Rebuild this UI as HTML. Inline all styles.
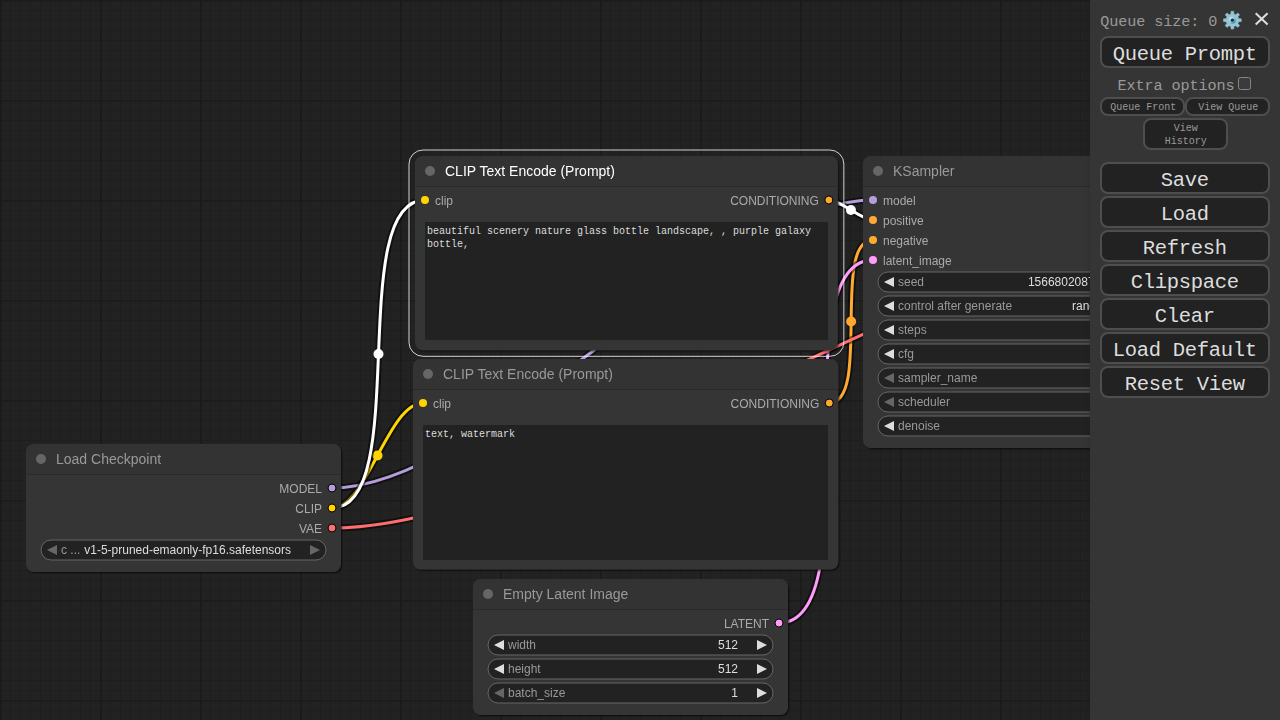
<!DOCTYPE html>
<html><head><meta charset="utf-8"><title>ComfyUI</title>
<style>
html,body{margin:0;padding:0;background:#222;}
body{width:1280px;height:720px;overflow:hidden;position:relative;font-family:"Liberation Sans", sans-serif;}
svg{position:absolute;left:0;top:0;display:block;}
svg text{font-family:"Liberation Sans", sans-serif;opacity:0.999;}
.ta{position:absolute;box-sizing:border-box;background:#222;color:#ddd;padding:3px 2px 2px 2px;font-family:"Liberation Mono", monospace;font-size:10px;line-height:13px;overflow:hidden;white-space:pre-wrap;word-wrap:break-word;}
.menu{position:absolute;left:1090px;top:0;width:170px;height:700px;padding:10px;background:#353535;color:#999;font-family:"Liberation Mono", monospace;font-size:15px;text-align:center;}
.msh{position:absolute;left:1090px;top:0;width:190px;height:720px;background:#353535;box-shadow:3px 3px 8px rgba(0,0,0,0.4);}
.menu .b,.menu .s{box-sizing:border-box;position:absolute;background:#222;border:2px solid #4e4e4e;border-radius:8px;}
.menu .t{position:absolute;white-space:pre;}
.menu .cb{position:absolute;left:148px;top:77px;width:11px;height:11px;border:1px solid #858585;border-radius:2.5px;background:#3b3b3b;}
.menu .gear{position:absolute;left:132px;top:10px;}
.menu .xx{position:absolute;left:165px;top:12px;}
</style></head><body>
<svg id="cv" width="1090" height="720" viewBox="0 0 1090 720">
<defs>
<pattern id="grid" width="100" height="100" patternUnits="userSpaceOnUse">
<rect width="100" height="100" fill="#222222"/>
<path d="M10 2V100M20 2V100M30 2V100M40 2V100M50 2V100M60 2V100M70 2V100M80 2V100M90 2V100" transform="translate(0.5,0)" stroke="#1e1e1e" stroke-width="1" shape-rendering="crispEdges"/>
<path d="M2 10H100M2 20H100M2 30H100M2 40H100M2 50H100M2 60H100M2 70H100M2 80H100M2 90H100" transform="translate(0,0.5)" stroke="#1e1e1e" stroke-width="1" shape-rendering="crispEdges"/>
<rect x="0" y="1" width="100" height="1" fill="#1e1e1e"/>
<rect x="1" y="0" width="1" height="100" fill="#1c1c1c"/>
<rect x="0" y="0" width="100" height="1" fill="#1b1b1b"/>
<rect x="0" y="0" width="1" height="100" fill="#1b1b1b"/>
</pattern>
<filter id="sh" x="-5%" y="-5%" width="112%" height="115%"><feDropShadow dx="1.4" dy="1.4" stdDeviation="0.75" flood-color="#000" flood-opacity="0.5"/></filter>
</defs>
<rect width="1280" height="720" fill="url(#grid)"/>
<g id="links">
<path d="M332 508C366.737 508 388.263 403 423 403" fill="none" stroke="rgba(0,0,0,0.5)" stroke-width="7"/>
<path d="M332 508C366.737 508 388.263 403 423 403" fill="none" stroke="#FFD500" stroke-width="3"/>
<circle cx="377.5" cy="455.5" r="5" fill="#FFD500"/>
<path d="M332 488C485.221 488 719.779 200 873 200" fill="none" stroke="rgba(0,0,0,0.5)" stroke-width="7"/>
<path d="M332 488C485.221 488 719.779 200 873 200" fill="none" stroke="#B39DDB" stroke-width="3"/>
<circle cx="602.5" cy="344" r="5" fill="#B39DDB"/>
<path d="M828.845 200C840.963 200 860.882 220 873 220" fill="none" stroke="rgba(0,0,0,0.5)" stroke-width="7"/>
<path d="M828.845 200C840.963 200 860.882 220 873 220" fill="none" stroke="#FFF" stroke-width="3"/>
<circle cx="850.923" cy="210" r="5" fill="#FFF"/>
<path d="M829.278 403C871.469 403 830.81 240 873 240" fill="none" stroke="rgba(0,0,0,0.5)" stroke-width="7"/>
<path d="M829.278 403C871.469 403 830.81 240 873 240" fill="none" stroke="#FFA931" stroke-width="3"/>
<circle cx="851.139" cy="321.5" r="5" fill="#FFA931"/>
<path d="M779 623C872.743 623 779.257 260 873 260" fill="none" stroke="rgba(0,0,0,0.5)" stroke-width="7"/>
<path d="M779 623C872.743 623 779.257 260 873 260" fill="none" stroke="#FF9CF9" stroke-width="3"/>
<circle cx="826" cy="441.5" r="5" fill="#FF9CF9"/>
<path d="M332 528C566.575 528 984.425 222 1219 222" fill="none" stroke="rgba(0,0,0,0.5)" stroke-width="7"/>
<path d="M332 528C566.575 528 984.425 222 1219 222" fill="none" stroke="#FF6E6E" stroke-width="3"/>
<circle cx="775.5" cy="375" r="5" fill="#FF6E6E"/>
<path d="M332 508C412.434 508 344.566 200 425 200" fill="none" stroke="rgba(0,0,0,0.5)" stroke-width="7"/>
<path d="M332 508C412.434 508 344.566 200 425 200" fill="none" stroke="#FFF" stroke-width="3"/>
<circle cx="378.5" cy="354" r="5" fill="#FFF"/>
</g>
<g>
<g transform="translate(26,474)">
<rect x="0" y="-30" width="315" height="128" rx="8" ry="8" fill="#353535" filter="url(#sh)"/>
<path d="M0 0V-22A8 8 0 0 1 8 -30H307A8 8 0 0 1 315 -22V0Z" fill="#333"/>
<rect x="0" y="0" width="315" height="1" fill="rgba(0,0,0,0.2)"/>
<circle cx="15" cy="-15" r="5" fill="#666"/>
<text x="30" y="-10" font-size="14" fill="#999">Load Checkpoint</text>
<circle cx="306" cy="14" r="4" fill="#B39DDB" stroke="#000" stroke-width="1"/>
<text x="296" y="19" font-size="12" fill="#AAA" text-anchor="end">MODEL</text>
<circle cx="306" cy="34" r="4" fill="#FFD500" stroke="#000" stroke-width="1"/>
<text x="296" y="39" font-size="12" fill="#AAA" text-anchor="end">CLIP</text>
<circle cx="306" cy="54" r="4" fill="#FF6E6E" stroke="#000" stroke-width="1"/>
<text x="296" y="59" font-size="12" fill="#AAA" text-anchor="end">VAE</text>
<rect x="15" y="66" width="285" height="20" rx="10" ry="10" fill="#222" stroke="#666" stroke-width="1"/>
<path d="M31 71L21 76L31 81Z" fill="#666"/>
<path d="M284 71L294 76L284 81Z" fill="#666"/>
<text x="35" y="80" font-size="12" fill="#999">c ...</text>
<text x="265" y="80" font-size="12" fill="#DDD" text-anchor="end">v1-5-pruned-emaonly-fp16.safetensors</text>
</g>
<g transform="translate(413,389)">
<rect x="0" y="-30" width="425.278" height="210.606" rx="8" ry="8" fill="#353535" filter="url(#sh)"/>
<path d="M0 0V-22A8 8 0 0 1 8 -30H417.278A8 8 0 0 1 425.278 -22V0Z" fill="#333"/>
<rect x="0" y="0" width="425.278" height="1" fill="rgba(0,0,0,0.2)"/>
<circle cx="15" cy="-15" r="5" fill="#666"/>
<text x="30" y="-10" font-size="14" fill="#999">CLIP Text Encode (Prompt)</text>
<circle cx="10" cy="14" r="4" fill="#FFD500"/>
<text x="20" y="19" font-size="12" fill="#AAA">clip</text>
<circle cx="416.278" cy="14" r="4" fill="#FFA931" stroke="#000" stroke-width="1"/>
<text x="406.278" y="19" font-size="12" fill="#AAA" text-anchor="end">CONDITIONING</text>
</g>
<g transform="translate(473,609)">
<rect x="0" y="-30" width="315" height="136" rx="8" ry="8" fill="#353535" filter="url(#sh)"/>
<path d="M0 0V-22A8 8 0 0 1 8 -30H307A8 8 0 0 1 315 -22V0Z" fill="#333"/>
<rect x="0" y="0" width="315" height="1" fill="rgba(0,0,0,0.2)"/>
<circle cx="15" cy="-15" r="5" fill="#666"/>
<text x="30" y="-10" font-size="14" fill="#999">Empty Latent Image</text>
<circle cx="306" cy="14" r="4" fill="#FF9CF9" stroke="#000" stroke-width="1"/>
<text x="296" y="19" font-size="12" fill="#AAA" text-anchor="end">LATENT</text>
<rect x="15" y="26" width="285" height="20" rx="10" ry="10" fill="#222" stroke="#666" stroke-width="1"/>
<path d="M31 31L21 36L31 41Z" fill="#DDD"/>
<path d="M284 31L294 36L284 41Z" fill="#DDD"/>
<text x="35" y="40" font-size="12" fill="#999">width</text>
<text x="265" y="40" font-size="12" fill="#DDD" text-anchor="end">512</text>
<rect x="15" y="50" width="285" height="20" rx="10" ry="10" fill="#222" stroke="#666" stroke-width="1"/>
<path d="M31 55L21 60L31 65Z" fill="#DDD"/>
<path d="M284 55L294 60L284 65Z" fill="#DDD"/>
<text x="35" y="64" font-size="12" fill="#999">height</text>
<text x="265" y="64" font-size="12" fill="#DDD" text-anchor="end">512</text>
<rect x="15" y="74" width="285" height="20" rx="10" ry="10" fill="#222" stroke="#666" stroke-width="1"/>
<path d="M31 79L21 84L31 89Z" fill="#666"/>
<path d="M284 79L294 84L284 89Z" fill="#DDD"/>
<text x="35" y="88" font-size="12" fill="#999">batch_size</text>
<text x="265" y="88" font-size="12" fill="#DDD" text-anchor="end">1</text>
</g>
<g transform="translate(863,186)">
<rect x="0" y="-30" width="315" height="292" rx="8" ry="8" fill="#353535" filter="url(#sh)"/>
<path d="M0 0V-22A8 8 0 0 1 8 -30H307A8 8 0 0 1 315 -22V0Z" fill="#333"/>
<rect x="0" y="0" width="315" height="1" fill="rgba(0,0,0,0.2)"/>
<circle cx="15" cy="-15" r="5" fill="#666"/>
<text x="30" y="-10" font-size="14" fill="#999">KSampler</text>
<circle cx="10" cy="14" r="4" fill="#B39DDB"/>
<text x="20" y="19" font-size="12" fill="#AAA">model</text>
<circle cx="10" cy="34" r="4" fill="#FFA931"/>
<text x="20" y="39" font-size="12" fill="#AAA">positive</text>
<circle cx="10" cy="54" r="4" fill="#FFA931"/>
<text x="20" y="59" font-size="12" fill="#AAA">negative</text>
<circle cx="10" cy="74" r="4" fill="#FF9CF9"/>
<text x="20" y="79" font-size="12" fill="#AAA">latent_image</text>
<circle cx="306" cy="14" r="4" fill="#FF9CF9" stroke="#000" stroke-width="1"/>
<text x="296" y="19" font-size="12" fill="#AAA" text-anchor="end">LATENT</text>
<rect x="15" y="86" width="285" height="20" rx="10" ry="10" fill="#222" stroke="#666" stroke-width="1"/>
<path d="M31 91L21 96L31 101Z" fill="#DDD"/>
<path d="M284 91L294 96L284 101Z" fill="#DDD"/>
<text x="35" y="100" font-size="12" fill="#999">seed</text>
<text x="265" y="100" font-size="12" fill="#DDD" text-anchor="end">156680208700286</text>
<rect x="15" y="110" width="285" height="20" rx="10" ry="10" fill="#222" stroke="#666" stroke-width="1"/>
<path d="M31 115L21 120L31 125Z" fill="#DDD"/>
<path d="M284 115L294 120L284 125Z" fill="#DDD"/>
<text x="35" y="124" font-size="12" fill="#999">control after generate</text>
<text x="265" y="124" font-size="12" fill="#DDD" text-anchor="end">randomize</text>
<rect x="15" y="134" width="285" height="20" rx="10" ry="10" fill="#222" stroke="#666" stroke-width="1"/>
<path d="M31 139L21 144L31 149Z" fill="#DDD"/>
<path d="M284 139L294 144L284 149Z" fill="#DDD"/>
<text x="35" y="148" font-size="12" fill="#999">steps</text>
<text x="265" y="148" font-size="12" fill="#DDD" text-anchor="end">20</text>
<rect x="15" y="158" width="285" height="20" rx="10" ry="10" fill="#222" stroke="#666" stroke-width="1"/>
<path d="M31 163L21 168L31 173Z" fill="#DDD"/>
<path d="M284 163L294 168L284 173Z" fill="#DDD"/>
<text x="35" y="172" font-size="12" fill="#999">cfg</text>
<text x="265" y="172" font-size="12" fill="#DDD" text-anchor="end">8.0</text>
<rect x="15" y="182" width="285" height="20" rx="10" ry="10" fill="#222" stroke="#666" stroke-width="1"/>
<path d="M31 187L21 192L31 197Z" fill="#666"/>
<path d="M284 187L294 192L284 197Z" fill="#DDD"/>
<text x="35" y="196" font-size="12" fill="#999">sampler_name</text>
<text x="265" y="196" font-size="12" fill="#DDD" text-anchor="end">euler</text>
<rect x="15" y="206" width="285" height="20" rx="10" ry="10" fill="#222" stroke="#666" stroke-width="1"/>
<path d="M31 211L21 216L31 221Z" fill="#666"/>
<path d="M284 211L294 216L284 221Z" fill="#DDD"/>
<text x="35" y="220" font-size="12" fill="#999">scheduler</text>
<text x="265" y="220" font-size="12" fill="#DDD" text-anchor="end">normal</text>
<rect x="15" y="230" width="285" height="20" rx="10" ry="10" fill="#222" stroke="#666" stroke-width="1"/>
<path d="M31 235L21 240L31 245Z" fill="#DDD"/>
<path d="M284 235L294 240L284 245Z" fill="#DDD"/>
<text x="35" y="244" font-size="12" fill="#999">denoise</text>
<text x="265" y="244" font-size="12" fill="#DDD" text-anchor="end">1.00</text>
</g>
<g transform="translate(415,186)">
<rect x="0" y="-30" width="422.845" height="194.313" rx="8" ry="8" fill="#353535" filter="url(#sh)"/>
<path d="M0 0V-22A8 8 0 0 1 8 -30H414.845A8 8 0 0 1 422.845 -22V0Z" fill="#333"/>
<rect x="0" y="0" width="422.845" height="1" fill="rgba(0,0,0,0.2)"/>
<circle cx="15" cy="-15" r="5" fill="#666"/>
<text x="30" y="-10" font-size="14" fill="#FFF">CLIP Text Encode (Prompt)</text>
<rect x="-6" y="-36" width="434.845" height="206.313" rx="14" ry="14" fill="none" stroke="#FFF" stroke-opacity="0.8" stroke-width="1"/>
<circle cx="10" cy="14" r="4" fill="#FFD500"/>
<text x="20" y="19" font-size="12" fill="#AAA">clip</text>
<circle cx="413.845" cy="14" r="4" fill="#FFA931" stroke="#000" stroke-width="1"/>
<text x="403.845" y="19" font-size="12" fill="#AAA" text-anchor="end">CONDITIONING</text>
</g>
</g>
</svg>
<div class="ta" style="left:425px;top:222px;width:402.845px;height:118px">beautiful scenery nature glass bottle landscape, , purple galaxy bottle,</div>
<div class="ta" style="left:423px;top:425px;width:405.278px;height:134.6px">text, watermark</div>
<div class="msh"></div>
<div class="menu">
<div class="t" style="left:10.3px;top:13px;font-size:15.2px;line-height:18px;letter-spacing:-0.12px;color:#999;background:#353535">Queue size: 0</div>
<svg class="gear" width="22" height="22" viewBox="0 0 22 22"><defs><linearGradient id="gg" x1="0.15" y1="0.15" x2="0.85" y2="0.85"><stop offset="0" stop-color="#c4e6ee"/><stop offset="0.45" stop-color="#8fc3d4"/><stop offset="1" stop-color="#3f93aa"/></linearGradient></defs><path d="M8.89 3.88L9.06 1.30L11.74 1.30L11.91 3.88L13.80 4.66L15.74 2.96L17.64 4.86L15.94 6.80L16.72 8.69L19.30 8.86L19.30 11.54L16.72 11.71L15.94 13.60L17.64 15.54L15.74 17.44L13.80 15.74L11.91 16.52L11.74 19.10L9.06 19.10L8.89 16.52L7.00 15.74L5.06 17.44L3.16 15.54L4.86 13.60L4.08 11.71L1.50 11.54L1.50 8.86L4.08 8.69L4.86 6.80L3.16 4.86L5.06 2.96L7.00 4.66Z" fill="#93c5d5" stroke="#93c5d5" stroke-width="0.5" stroke-linejoin="round"/><circle cx="10.4" cy="10.2" r="2.7" fill="none" stroke="url(#gg)" stroke-width="1.5"/><circle cx="10.4" cy="10.2" r="1.6" fill="#2a2c2d"/></svg>
<svg class="xx" width="14" height="14" viewBox="0 0 14 14"><path d="M0.7 1.2L12.6 12.4M12.6 1.2L0.7 12.4" stroke="#dedede" stroke-width="2" fill="none"/></svg>
<div class="b" style="left:10px;top:36px;width:170px;height:32px"></div><div class="t" style="left:22.85px;top:43px;font-size:20.5px;line-height:23px;letter-spacing:-0.3px;color:#ddd;background:#222">Queue Prompt</div>
<div class="t" style="left:27.6px;top:77px;font-size:15.2px;line-height:18px;letter-spacing:-0.12px;color:#999;background:#353535">Extra options</div>
<div class="cb"></div>
<div class="s" style="left:10px;top:97px;width:85px;height:18.5px"></div><div class="t" style="left:20.2px;top:102px;font-size:10px;line-height:11px;letter-spacing:0px;color:#999;background:#222">Queue Front</div>
<div class="s" style="left:95px;top:97px;width:85px;height:18.5px"></div><div class="t" style="left:108.2px;top:102px;font-size:10px;line-height:11px;letter-spacing:0px;color:#999;background:#222">View Queue</div>
<div class="s" style="left:52.5px;top:118px;width:85px;height:31.5px"></div><div class="t" style="left:83.7px;top:123px;font-size:10px;line-height:11px;letter-spacing:0px;color:#999;background:#222">View</div><div class="t" style="left:74.7px;top:136px;font-size:10px;line-height:11px;letter-spacing:0px;color:#999;background:#222">History</div>
<div class="b" style="left:10px;top:162px;width:170px;height:32px"></div><div class="t" style="left:70.85px;top:169px;font-size:20.5px;line-height:23px;letter-spacing:-0.3px;color:#ddd;background:#222">Save</div>
<div class="b" style="left:10px;top:196px;width:170px;height:32px"></div><div class="t" style="left:70.85px;top:203px;font-size:20.5px;line-height:23px;letter-spacing:-0.3px;color:#ddd;background:#222">Load</div>
<div class="b" style="left:10px;top:230px;width:170px;height:32px"></div><div class="t" style="left:52.85px;top:237px;font-size:20.5px;line-height:23px;letter-spacing:-0.3px;color:#ddd;background:#222">Refresh</div>
<div class="b" style="left:10px;top:264px;width:170px;height:32px"></div><div class="t" style="left:40.85px;top:271px;font-size:20.5px;line-height:23px;letter-spacing:-0.3px;color:#ddd;background:#222">Clipspace</div>
<div class="b" style="left:10px;top:298px;width:170px;height:32px"></div><div class="t" style="left:64.85px;top:305px;font-size:20.5px;line-height:23px;letter-spacing:-0.3px;color:#ddd;background:#222">Clear</div>
<div class="b" style="left:10px;top:332px;width:170px;height:32px"></div><div class="t" style="left:22.85px;top:339px;font-size:20.5px;line-height:23px;letter-spacing:-0.3px;color:#ddd;background:#222">Load Default</div>
<div class="b" style="left:10px;top:366px;width:170px;height:32px"></div><div class="t" style="left:34.85px;top:373px;font-size:20.5px;line-height:23px;letter-spacing:-0.3px;color:#ddd;background:#222">Reset View</div>
</div>
</body></html>
